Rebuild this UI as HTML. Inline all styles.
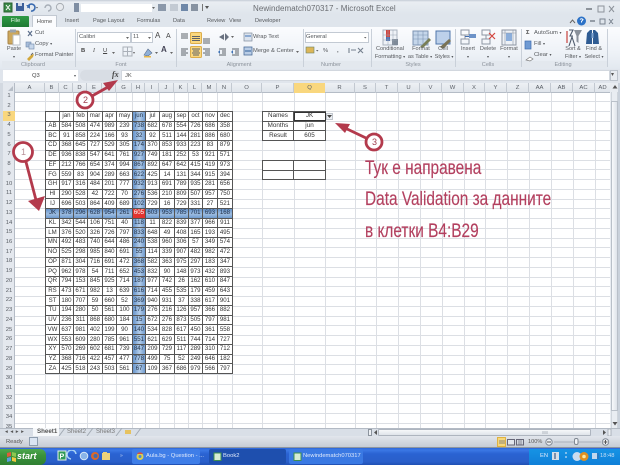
<!DOCTYPE html>
<html><head><meta charset="utf-8">
<style>
html,body{margin:0;padding:0;width:620px;height:465px;overflow:hidden;background:#fff}
#p{position:relative;width:620px;height:465px;overflow:hidden;font-family:"Liberation Sans",sans-serif;filter:blur(.3px);background:#fff}
.a{position:absolute}
.t{position:absolute;white-space:nowrap;font-size:5.8px;line-height:8px;color:#55585c}
.c{position:absolute;white-space:nowrap;font-size:5.6px;line-height:7px;color:#55585c;text-align:center;transform:translateX(-50%)}
.c span,.t span{font-size:4px}
.g{position:absolute;top:62px;font-size:5.6px;line-height:7px;color:#8b929b;transform:translateX(-50%);white-space:nowrap}
.s{position:absolute;top:29px;width:1px;height:38px;background:#c9d0d9}
table{position:absolute;border-collapse:collapse;table-layout:fixed;font-size:6.1px;color:#333;background:#fff}
td{border:1px solid #555;padding:0;text-align:center;line-height:8px;overflow:hidden;white-space:nowrap}
#d td:nth-child(7){background:linear-gradient(90deg,#6a97cd,#b4cde9 50%,#6a97cd);color:#25354a}
#d tr.h td{background:linear-gradient(180deg,#6a97cd,#9dbce0 50%,#6a97cd);color:#22324a}
#d tr.h td.r{background:#e2342f;color:#fff}
.tb{position:absolute;top:449px;height:15px;color:#dfe9fb;font-size:5.8px;line-height:15px;border-radius:2px;white-space:nowrap}
.n{position:absolute;left:365px;font-size:19.5px;line-height:24px;color:#b3405f;white-space:nowrap;transform:scaleX(.79);transform-origin:0 0;-webkit-text-stroke:.15px #b3405f}
</style></head><body><div id="p">

<!-- title + ribbon -->
<div class="a" style="left:0;top:0;width:620px;height:14px;background:linear-gradient(#c4ccd6 0,#e9edf2 2px,#dfe5ec)"></div>
<div class="a" style="left:0;top:14px;width:620px;height:13px;background:#dfe5ec"></div>
<div class="a" style="left:0;top:27px;width:620px;height:42px;background:linear-gradient(#fbfcfe,#eef2f7 60%,#e2e8ef);border-bottom:1px solid #a9b1bb"></div>
<div class="a" style="left:2px;top:61px;width:606px;height:7px;background:#e3e8ee"></div>

<!-- QAT -->
<svg class="a" style="left:0;top:0" width="250" height="14">
<rect x="4" y="3" width="8" height="9" fill="#3b8a48" stroke="#27602f"/><path d="M6 5l4 5M10 5l-4 5" stroke="#fff" stroke-width="1"/>
<rect x="16" y="3" width="8" height="8" fill="#3c5f99"/><rect x="18" y="3" width="4" height="3" fill="#cfd8e8"/>
<path d="M28 8a3.5 3.5 0 1 1 3 3" fill="none" stroke="#3c6cb0" stroke-width="1.6"/><path d="M26 5h4v4z" fill="#3c6cb0"/>
<path d="M36 7l2 0-1 1.5z" fill="#555"/>
<path d="M45 8a3 3 0 1 1 3 3" fill="none" stroke="#a6adb6" stroke-width="1.4"/>
<circle cx="60" cy="7" r="3.6" fill="#e7eaee" stroke="#a8adb3"/><rect x="74" y="3" width="5" height="9" fill="#7f8ea3"/>
<rect x="81" y="4" width="71" height="8" fill="#fff"/>
<path d="M152 7h3l-1.500 2z" fill="#666"/>
<rect x="158" y="4" width="8" height="7" fill="#8b98aa"/><rect x="170" y="4" width="8" height="7" fill="#c3cad3"/><rect x="181" y="4" width="7" height="7" fill="#6f88a9"/><rect x="191" y="4" width="7" height="7" fill="#8893a2"/>
<rect x="202" y="4" width="1" height="7" fill="#777"/><path d="M205 6h4l-2 3z" fill="#555"/>
</svg>
<div class="t" style="left:253px;top:4px;font-size:8px;line-height:9px;letter-spacing:.05px;color:#6a6d72">Newindematch070317 - Microsoft Excel</div>
<svg class="a" style="left:580px;top:2px" width="40" height="24">
<path d="M6 7h6" stroke="#8d939b" stroke-width="2"/><rect x="18" y="4" width="6" height="6" fill="none" stroke="#8d939b"/><path d="M29 4l5 6M34 4l-5 6" stroke="#8d939b"/>
</svg>
<svg class="a" style="left:565px;top:14px" width="50" height="14">
<path d="M5 9l2.500-3 2.500 3" fill="none" stroke="#666"/><circle cx="16.500" cy="7" r="4.500" fill="#2c72c7"/><path d="M15 5.500q1.500-1.500 3 0l-1.500 2v1" fill="none" stroke="#fff"/>
<path d="M25 7h5" stroke="#7a838f" stroke-width="1.500"/><rect x="35" y="5" width="5" height="5" fill="none" stroke="#7a838f"/><path d="M44 5l4 5M48 5l-4 5" stroke="#7a838f"/>
</svg>

<!-- tabs -->
<div class="a" style="left:2px;top:16px;width:27px;height:11px;background:linear-gradient(#2e9a44,#1f7a34);border-radius:1px 1px 0 0;color:#e9f5ea;font-size:5.8px;line-height:11px;text-align:center">File</div>
<div class="a" style="left:32px;top:15px;width:25px;height:12px;background:#fbfcfe;border:1px solid #c2c9d2;border-bottom:0;box-sizing:border-box;color:#555;font-size:5.8px;line-height:12px;text-align:center">Home</div>
<div class="t" style="left:65px;top:17px;font-size:5.6px">Insert</div>
<div class="t" style="left:93px;top:17px;font-size:5.6px">Page Layout</div>
<div class="t" style="left:137px;top:17px;font-size:5.6px">Formulas</div>
<div class="t" style="left:173px;top:17px;font-size:5.6px">Data</div>
<div class="t" style="left:207px;top:17px;font-size:5.6px">Review</div>
<div class="t" style="left:229px;top:17px;font-size:5.6px">View</div>
<div class="t" style="left:255px;top:17px;font-size:5.6px">Developer</div>

<!-- separators -->
<div class="s" style="left:75px"></div><div class="s" style="left:176px"></div><div class="s" style="left:303px"></div><div class="s" style="left:371px"></div><div class="s" style="left:455px"></div><div class="s" style="left:521px"></div><div class="s" style="left:607px"></div>

<!-- ribbon icons -->
<svg class="a" style="left:0;top:27px" width="620" height="36">
<rect x="8" y="4" width="11" height="13" rx="1" fill="#cda85c" stroke="#a9854a"/><rect x="10" y="2.500" width="6" height="3" fill="#9aa3ad"/><rect x="13" y="8" width="7" height="10" fill="#fff" stroke="#b7bdc5"/>
<path d="M28 4l4 5M32 4l-4 5" stroke="#5d6f8c" stroke-width="1.200"/>
<rect x="26" y="15" width="5" height="5" fill="#a7bddb" stroke="#6f88a9" stroke-width=".6"/><rect x="29" y="17" width="5" height="5" fill="#c6d6ea" stroke="#6f88a9" stroke-width=".6"/>
<path d="M27 32l4-4 3-1-1 3-4 4z" fill="#d2a73b"/><path d="M31 28l2-2" stroke="#666"/>
<rect x="77.500" y="5.500" width="53" height="10" fill="#fff" stroke="#c3cad3"/><rect x="131.500" y="5.500" width="21" height="10" fill="#fff" stroke="#c3cad3"/>
<path d="M126 10h3l-1.500 2zM148 10h3l-1.500 2z" fill="#666"/>
<path d="M112 25h3l-1.500 2zM133 25h2l-1 2zM155 25h3l-1.500 2zM170 25h3l-1.500 2z" fill="#666"/>
<rect x="123" y="20" width="9" height="9" fill="none" stroke="#aab0b8"/><path d="M127.500 20v9M123 24.500h9" stroke="#aab0b8"/>
<path d="M144 28l4-6 4 4-4 3z" fill="#8fb0d8" stroke="#5a6f8d" stroke-width=".6"/><rect x="144" y="29" width="7" height="1.500" fill="#e7b84a"/>
<rect x="190.500" y="5.500" width="11" height="11" rx="1" fill="#fbd87e" stroke="#dcae4c"/><rect x="190.500" y="19.500" width="11" height="11" rx="1" fill="#fbd87e" stroke="#dcae4c"/>
<path d="M181 7h7M181 9h7M181 11h7M192 9.500h8M192 11.500h8M192 13.500h8M203 12h7M203 14h7M203 16h7" stroke="#5c6268" stroke-width="1"/>
<path d="M181 22h7M181 24h5M181 26h7M181 28h5M192 22h8M193 24h6M192 26h8M193 28h6M203 22h7M205 24h5M203 26h7M205 28h5" stroke="#5c6268"/>
<path d="M219 10l5-3v6zM225 6l4 4-4 4" fill="#6a7280"/><path d="M231 9h3l-1.500 2z" fill="#666"/>
<path d="M219 22h7M222 24h4M222 26h4M219 28h7M232 22h7M235 24h4M235 26h4M232 28h7" stroke="#5c6268"/>
<path d="M218 25l2-2v4zM231 25l2-2v4z" fill="#3e72b5"/>
<rect x="244" y="6" width="8" height="8" fill="#dbe3ee" stroke="#7f8b9b" stroke-width=".7"/><path d="M245 9h6" stroke="#3e72b5"/>
<rect x="244" y="20" width="8" height="8" fill="#b9cde6" stroke="#4b6d99" stroke-width=".8"/><path d="M245 24h6" stroke="#2f5e9b"/>
<path d="M296 24h3l-1.500 2z" fill="#666"/>
<rect x="305.500" y="5.500" width="63" height="10" fill="#fff" stroke="#c3cad3"/><path d="M364 10h2.500l-1.250 1.500z" fill="#666"/>
<rect x="306" y="20" width="8" height="6" fill="#dcb658" stroke="#6e8467" stroke-width=".6"/><path d="M316 23h2.500l-1.250 1.500z" fill="#666"/>
<path d="M349 21v5M351 23h5M358 21l5 5M363 21l-5 5" stroke="#75808e" stroke-width="1.100"/>
<rect x="383" y="3" width="14" height="15" fill="#eef2f7" stroke="#a9b3bf"/><rect x="386" y="3" width="4" height="7" fill="#d1433c"/><rect x="386" y="10" width="4" height="4" fill="#4a6fb0"/><rect x="392" y="12" width="6" height="6" fill="#7e8a98"/>
<path d="M383 8h14M383 13h14M388 3v15M393 3v15" stroke="#9aa5b3" stroke-width=".5"/>
<rect x="413" y="4" width="15" height="14" fill="#c5d6ea" stroke="#7c93b1"/><path d="M413 8h15M413 12h15M418 4v14M423 4v14" stroke="#7c93b1" stroke-width=".6"/><path d="M420 20l9-9 2 2-8 8z" fill="#7a7f57"/>
<rect x="436" y="4" width="14" height="13" fill="#bcd0ea" stroke="#4f76ab"/><path d="M440 20l9-8 2 2-8 8z" fill="#7a7356"/>
<rect x="461" y="3" width="8" height="5" fill="none" stroke="#8d96a3"/><rect x="461" y="12" width="8" height="5" fill="none" stroke="#8d96a3"/><path d="M465 8v4" stroke="#8d96a3"/><rect x="469" y="7" width="7" height="4" fill="#6d93c8"/><path d="M465 9.500h4" stroke="#3e6cb0"/>
<rect x="482" y="3" width="8" height="5" fill="none" stroke="#8d96a3"/><rect x="482" y="12" width="8" height="5" fill="none" stroke="#8d96a3"/><path d="M486 8v4" stroke="#8d96a3"/><path d="M489 6l6 6M495 6l-6 6" stroke="#d4463f" stroke-width="1.200"/>
<rect x="502" y="3" width="14" height="15" fill="#eef2f7" stroke="#8d96a3"/><rect x="506" y="6" width="6" height="8" fill="#8baedb"/><path d="M502 6h14M505 3v15M513 3v15" stroke="#8d96a3" stroke-width=".6"/>
<rect x="525" y="14" width="6" height="8" fill="#6f9ad3" stroke="#3e6cb0" stroke-width=".7"/>
<path d="M526 33l4-3 3 2-3 2z" fill="#fff" stroke="#7a7a7a" stroke-width=".7"/>
<path d="M569 3l4 0-3 6h3M569 19l3-9 3 9" fill="none" stroke="#4d5a6c" stroke-width="1.100"/><path d="M567 4v12" stroke="#c6413c" stroke-width="1.200"/><path d="M574 3h8l-3.500 6v7l-2-1.500V9z" fill="#8a919b"/>
<path d="M587 6l3-3h2v14h-6zM598 6l-3-3h-2v14h6z" fill="#2f5c93"/><rect x="591.500" y="6" width="2" height="5" fill="#7fa4d0"/>
</svg>

<!-- ribbon text -->
<div class="c" style="left:14px;top:46px">Paste</div><div class="c" style="left:14px;top:53px"><span>▾</span></div>
<div class="t" style="left:35px;top:29px">Cut</div><div class="t" style="left:35px;top:40px">Copy <span>▾</span></div><div class="t" style="left:35px;top:51px">Format Painter</div>
<div class="g" style="left:33px">Clipboard</div><div class="g" style="left:121px">Font</div><div class="g" style="left:239px">Alignment</div><div class="g" style="left:331px">Number</div><div class="g" style="left:413px">Styles</div><div class="g" style="left:488px">Cells</div><div class="g" style="left:563px">Editing</div>
<div class="t" style="left:79px;top:33px">Calibri</div><div class="t" style="left:133px;top:33px">11</div>
<div class="t" style="left:155px;top:32px;font-size:8px;color:#444">A</div><div class="t" style="left:166px;top:33px;font-size:7px;color:#444">A</div>
<div class="t" style="left:81px;top:47px;font-weight:bold;color:#444">B</div><div class="t" style="left:93px;top:47px;font-style:italic;font-family:'Liberation Serif',serif;color:#444">I</div><div class="t" style="left:103px;top:47px;text-decoration:underline;color:#444">U</div>
<div class="t" style="left:161px;top:46px;font-size:8px;color:#445;font-weight:bold">A</div>
<div class="t" style="left:253px;top:33px">Wrap Text</div><div class="t" style="left:253px;top:47px">Merge &amp; Center</div>
<div class="t" style="left:306px;top:33px;color:#4f5358">General</div>
<div class="t" style="left:323px;top:47px">%</div><div class="t" style="left:337px;top:47px;font-weight:bold">,</div>
<div class="c" style="left:390px;top:46px">Conditional</div><div class="c" style="left:390px;top:53px">Formatting <span>▾</span></div>
<div class="c" style="left:421px;top:46px">Format</div><div class="c" style="left:420px;top:53px">as Table <span>▾</span></div>
<div class="c" style="left:443px;top:46px">Cell</div><div class="c" style="left:444px;top:53px">Styles <span>▾</span></div>
<div class="c" style="left:468px;top:46px">Insert</div><div class="c" style="left:488px;top:46px">Delete</div><div class="c" style="left:509px;top:46px">Format</div>
<div class="c" style="left:468px;top:53px"><span>▾</span></div><div class="c" style="left:488px;top:53px"><span>▾</span></div><div class="c" style="left:509px;top:53px"><span>▾</span></div>
<div class="t" style="left:526px;top:29px;font-weight:bold;color:#444">Σ</div><div class="t" style="left:534px;top:29px">AutoSum <span>▾</span></div><div class="t" style="left:534px;top:40px">Fill <span>▾</span></div><div class="t" style="left:534px;top:51px">Clear <span>▾</span></div>
<div class="c" style="left:573px;top:46px">Sort &amp;</div><div class="c" style="left:573px;top:53px">Filter <span>▾</span></div>
<div class="c" style="left:594px;top:46px">Find &amp;</div><div class="c" style="left:594px;top:53px">Select <span>▾</span></div>

<!-- formula bar -->
<div class="a" style="left:0;top:69px;width:620px;height:14px;background:#e0e5ec"></div>
<div class="a" style="left:3px;top:70px;width:75px;height:11px;background:#fff"></div>
<div class="t" style="left:32px;top:72px;color:#444">Q3</div><div class="t" style="left:74px;top:72px"><span>▾</span></div>
<div class="a" style="left:80px;top:70px;width:40px;height:11px;background:#d8dde4;border-radius:6px"></div>
<div class="t" style="left:112px;top:71px;font-style:italic;font-weight:bold;font-family:'Liberation Serif',serif;font-size:8px;color:#444">fx</div>
<div class="a" style="left:121px;top:70px;width:489px;height:11px;background:#fff;border:1px solid #d2d7de;box-sizing:border-box"></div>
<div class="t" style="left:125px;top:72px;color:#555">JK</div>
<div class="a" style="left:610px;top:70px;width:8px;height:11px;background:#e8ecf1;border:1px solid #bcc3cc;box-sizing:border-box"></div>
<div class="a" style="left:611px;top:72px;font-size:6px;line-height:7px;color:#555">▾</div>

<!-- sheet grid -->
<svg class="a" style="left:0;top:0" width="620" height="465">
<path d="M45.500 92V428M59.500 92V428M73.500 92V428M87.500 92V428M102.500 92V428M116.500 92V428M132.500 92V428M145.500 92V428M159.500 92V428M174.500 92V428M188.500 92V428M202.500 92V428M217.500 92V428M232.500 92V428M262.500 92V428M294.500 92V428M325.500 92V428M355.500 92V428M376.500 92V428M398.500 92V428M420.500 92V428M442.500 92V428M464.500 92V428M485.500 92V428M507.500 92V428M529.500 92V428M551.500 92V428M573.500 92V428M595.500 92V428" stroke="#dcdfe4"/>
<path d="M15 101.500H610M15 111.500H610M15 121.500H610M15 130.500H610M15 140.500H610M15 150.500H610M15 160.500H610M15 169.500H610M15 179.500H610M15 189.500H610M15 199.500H610M15 208.500H610M15 218.500H610M15 228.500H610M15 238.500H610M15 247.500H610M15 257.500H610M15 267.500H610M15 277.500H610M15 286.500H610M15 296.500H610M15 306.500H610M15 316.500H610M15 325.500H610M15 335.500H610M15 345.500H610M15 355.500H610M15 364.500H610M15 374.500H610M15 384.500H610M15 394.500H610M15 403.500H610M15 413.500H610M15 423.500H610" stroke="#dcdfe4"/>
</svg>

<!-- col headers -->
<div class="a" style="left:0;top:83px;width:620px;height:9px;background:linear-gradient(#edf0f4,#dfe4ea);border-bottom:1px solid #b5bcc6;box-sizing:content-box"></div>
<div class="a" style="left:0;top:83px;height:10px;display:flex;font-size:5.9px;line-height:10px;color:#5a5f66;text-align:center;padding-left:15px">
<div style="width:30px;border-right:1px solid #c3c9d1;box-sizing:border-box">A</div><div style="width:14px;border-right:1px solid #c3c9d1;box-sizing:border-box">B</div><div style="width:14px;border-right:1px solid #c3c9d1;box-sizing:border-box">C</div><div style="width:14px;border-right:1px solid #c3c9d1;box-sizing:border-box">D</div><div style="width:15px;border-right:1px solid #c3c9d1;box-sizing:border-box">E</div><div style="width:14px;border-right:1px solid #c3c9d1;box-sizing:border-box">F</div><div style="width:16px;border-right:1px solid #c3c9d1;box-sizing:border-box">G</div><div style="width:13px;border-right:1px solid #c3c9d1;box-sizing:border-box">H</div><div style="width:14px;border-right:1px solid #c3c9d1;box-sizing:border-box">I</div><div style="width:15px;border-right:1px solid #c3c9d1;box-sizing:border-box">J</div><div style="width:14px;border-right:1px solid #c3c9d1;box-sizing:border-box">K</div><div style="width:14px;border-right:1px solid #c3c9d1;box-sizing:border-box">L</div><div style="width:15px;border-right:1px solid #c3c9d1;box-sizing:border-box">M</div><div style="width:15px;border-right:1px solid #c3c9d1;box-sizing:border-box">N</div><div style="width:30px;border-right:1px solid #c3c9d1;box-sizing:border-box">O</div><div style="width:32px;border-right:1px solid #c3c9d1;box-sizing:border-box">P</div><div style="width:31px;background:#f9d77e;box-sizing:border-box">Q</div><div style="width:30px;border-right:1px solid #c3c9d1;box-sizing:border-box">R</div><div style="width:21px;border-right:1px solid #c3c9d1;box-sizing:border-box">S</div><div style="width:22px;border-right:1px solid #c3c9d1;box-sizing:border-box">T</div><div style="width:22px;border-right:1px solid #c3c9d1;box-sizing:border-box">U</div><div style="width:22px;border-right:1px solid #c3c9d1;box-sizing:border-box">V</div><div style="width:22px;border-right:1px solid #c3c9d1;box-sizing:border-box">W</div><div style="width:21px;border-right:1px solid #c3c9d1;box-sizing:border-box">X</div><div style="width:22px;border-right:1px solid #c3c9d1;box-sizing:border-box">Y</div><div style="width:22px;border-right:1px solid #c3c9d1;box-sizing:border-box">Z</div><div style="width:22px;border-right:1px solid #c3c9d1;box-sizing:border-box">AA</div><div style="width:22px;border-right:1px solid #c3c9d1;box-sizing:border-box">AB</div><div style="width:22px;border-right:1px solid #c3c9d1;box-sizing:border-box">AC</div><div style="width:15px">AD</div>
</div>

<!-- row headers -->
<div class="a" style="left:0;top:83px;width:3px;height:353px;background:#d3d9e1"></div>
<div class="a" style="left:3px;top:83px;width:12px;height:345px;background:#e4e8ee;border-right:1px solid #b5bcc6;box-sizing:border-box"></div>
<div class="a" style="left:3px;top:111px;width:12px;height:10px;background:#f9d77e"></div>
<div class="a" style="left:3px;top:92px;width:12px;height:336px;overflow:hidden;font-size:5.9px;line-height:9.74px;color:#5a5f66;text-align:center">1<br>2<br>3<br>4<br>5<br>6<br>7<br>8<br>9<br>10<br>11<br>12<br>13<br>14<br>15<br>16<br>17<br>18<br>19<br>20<br>21<br>22<br>23<br>24<br>25<br>26<br>27<br>28<br>29<br>30<br>31<br>32<br>33<br>34<br>35</div>
<div class="a" style="left:3px;top:83px;width:12px;height:9px;background:#e4e8ee;border-right:1px solid #b5bcc6;box-sizing:border-box"></div>
<svg class="a" style="left:8px;top:86px" width="6" height="6"><path d="M5 0v5H0z" fill="#b7bec7"/></svg>

<!-- data table -->
<table id="d" style="left:45px;top:111px;width:188px;height:263px">
<colgroup><col style="width:14px"><col style="width:14px"><col style="width:14px"><col style="width:15px"><col style="width:14px"><col style="width:16px"><col style="width:13px"><col style="width:14px"><col style="width:15px"><col style="width:14px"><col style="width:14px"><col style="width:15px"><col style="width:15px"></colgroup>
<tr><td></td><td>jan</td><td>feb</td><td>mar</td><td>apr</td><td>may</td><td>jun</td><td>jul</td><td>aug</td><td>sep</td><td>oct</td><td>nov</td><td>dec</td></tr>
<tr><td>AB</td><td>584</td><td>508</td><td>474</td><td>989</td><td>239</td><td>738</td><td>682</td><td>678</td><td>554</td><td>726</td><td>686</td><td>358</td></tr>
<tr><td>BC</td><td>91</td><td>858</td><td>224</td><td>166</td><td>93</td><td>32</td><td>92</td><td>511</td><td>144</td><td>281</td><td>886</td><td>680</td></tr>
<tr><td>CD</td><td>368</td><td>645</td><td>727</td><td>529</td><td>305</td><td>174</td><td>370</td><td>853</td><td>933</td><td>223</td><td>83</td><td>879</td></tr>
<tr><td>DE</td><td>936</td><td>838</td><td>547</td><td>641</td><td>761</td><td>927</td><td>749</td><td>181</td><td>252</td><td>53</td><td>921</td><td>571</td></tr>
<tr><td>EF</td><td>212</td><td>766</td><td>654</td><td>374</td><td>994</td><td>867</td><td>892</td><td>647</td><td>642</td><td>415</td><td>419</td><td>973</td></tr>
<tr><td>FG</td><td>559</td><td>83</td><td>904</td><td>289</td><td>663</td><td>622</td><td>425</td><td>14</td><td>131</td><td>344</td><td>915</td><td>394</td></tr>
<tr><td>GH</td><td>917</td><td>316</td><td>484</td><td>201</td><td>777</td><td>932</td><td>913</td><td>691</td><td>789</td><td>935</td><td>281</td><td>656</td></tr>
<tr><td>HI</td><td>290</td><td>528</td><td>42</td><td>722</td><td>70</td><td>276</td><td>536</td><td>210</td><td>809</td><td>507</td><td>957</td><td>750</td></tr>
<tr><td>IJ</td><td>696</td><td>503</td><td>864</td><td>409</td><td>689</td><td>102</td><td>729</td><td>16</td><td>729</td><td>331</td><td>27</td><td>521</td></tr>
<tr class="h"><td>JK</td><td>378</td><td>296</td><td>628</td><td>954</td><td>261</td><td class="r">605</td><td>603</td><td>953</td><td>785</td><td>701</td><td>693</td><td>168</td></tr>
<tr><td>KL</td><td>342</td><td>544</td><td>106</td><td>751</td><td>40</td><td>118</td><td>11</td><td>822</td><td>839</td><td>377</td><td>966</td><td>911</td></tr>
<tr><td>LM</td><td>376</td><td>520</td><td>326</td><td>726</td><td>797</td><td>833</td><td>648</td><td>49</td><td>408</td><td>165</td><td>193</td><td>495</td></tr>
<tr><td>MN</td><td>492</td><td>483</td><td>740</td><td>644</td><td>486</td><td>240</td><td>538</td><td>960</td><td>306</td><td>57</td><td>349</td><td>574</td></tr>
<tr><td>NO</td><td>525</td><td>298</td><td>985</td><td>840</td><td>691</td><td>55</td><td>114</td><td>339</td><td>907</td><td>482</td><td>982</td><td>472</td></tr>
<tr><td>OP</td><td>871</td><td>304</td><td>716</td><td>691</td><td>472</td><td>368</td><td>582</td><td>363</td><td>975</td><td>297</td><td>183</td><td>347</td></tr>
<tr><td>PQ</td><td>962</td><td>978</td><td>54</td><td>711</td><td>652</td><td>453</td><td>832</td><td>90</td><td>148</td><td>973</td><td>432</td><td>893</td></tr>
<tr><td>QR</td><td>794</td><td>153</td><td>845</td><td>925</td><td>714</td><td>187</td><td>977</td><td>742</td><td>26</td><td>162</td><td>610</td><td>847</td></tr>
<tr><td>RS</td><td>473</td><td>671</td><td>982</td><td>13</td><td>639</td><td>616</td><td>714</td><td>455</td><td>535</td><td>179</td><td>459</td><td>643</td></tr>
<tr><td>ST</td><td>180</td><td>707</td><td>59</td><td>660</td><td>52</td><td>369</td><td>940</td><td>931</td><td>37</td><td>338</td><td>617</td><td>901</td></tr>
<tr><td>TU</td><td>194</td><td>280</td><td>50</td><td>561</td><td>100</td><td>179</td><td>276</td><td>216</td><td>126</td><td>957</td><td>366</td><td>882</td></tr>
<tr><td>UV</td><td>236</td><td>311</td><td>868</td><td>680</td><td>184</td><td>15</td><td>672</td><td>276</td><td>873</td><td>505</td><td>797</td><td>981</td></tr>
<tr><td>VW</td><td>637</td><td>981</td><td>402</td><td>199</td><td>90</td><td>140</td><td>534</td><td>828</td><td>617</td><td>450</td><td>361</td><td>558</td></tr>
<tr><td>WX</td><td>553</td><td>609</td><td>280</td><td>785</td><td>961</td><td>551</td><td>621</td><td>629</td><td>511</td><td>744</td><td>714</td><td>727</td></tr>
<tr><td>XY</td><td>570</td><td>269</td><td>602</td><td>681</td><td>739</td><td>847</td><td>209</td><td>729</td><td>117</td><td>289</td><td>310</td><td>712</td></tr>
<tr><td>YZ</td><td>368</td><td>716</td><td>422</td><td>457</td><td>477</td><td>778</td><td>499</td><td>75</td><td>52</td><td>249</td><td>646</td><td>182</td></tr>
<tr><td>ZA</td><td>425</td><td>518</td><td>243</td><td>503</td><td>561</td><td>67</td><td>109</td><td>367</td><td>686</td><td>979</td><td>566</td><td>797</td></tr>
</table>

<!-- side tables -->
<table style="left:262px;top:111px;width:63px;height:30px;font-size:6.3px">
<colgroup><col style="width:31px"><col style="width:32px"></colgroup>
<tr><td>Names</td><td style="outline:1.500px solid #333;outline-offset:-1px">JK</td></tr><tr><td>Months</td><td>jun</td></tr><tr><td>Result</td><td>605</td></tr>
</table>
<table style="left:262px;top:160px;width:63px;height:20px">
<colgroup><col style="width:31px"><col style="width:32px"></colgroup>
<tr><td>&nbsp;</td><td>&nbsp;</td></tr><tr><td>&nbsp;</td><td>&nbsp;</td></tr>
</table>
<div class="a" style="left:326px;top:113px;width:7px;height:7px;background:#eceff3;border:1px solid #c0c5cc;box-sizing:border-box"></div>
<svg class="a" style="left:327px;top:115px" width="5" height="3"><path d="M0 0h5L2.500 3z" fill="#444"/></svg>

<!-- annotation text -->
<div class="n" style="top:156px">Тук е направена</div>
<div class="n" style="top:187px">Data Validation за данните</div>
<div class="n" style="top:219px">в клетки B4:B29</div>

<!-- annotation arrows -->
<svg class="a" style="left:0;top:0" width="620" height="465">
<g fill="none" stroke="#b33a4c" stroke-width="2.800">
<path d="M26 162L36 200"/><circle cx="23" cy="152" r="9.500" fill="#fff"/>
<path d="M92 96L108 87" stroke-width="3"/><circle cx="85" cy="100" r="8" fill="#fff"/>
<path d="M366 138L345 128"/><circle cx="374" cy="142" r="8" fill="#fff"/>
</g>
<path d="M28 201L45 196L39 211Z" fill="#b33a4c"/>
<path d="M118 80L103 83L109 91Z" fill="#b33a4c"/>
<path d="M335 123L350 124L345 133Z" fill="#b33a4c"/>
<text x="21" y="155" font-size="9" fill="#b89098" font-family="Liberation Sans">1</text>
<text x="83" y="103" font-size="9" fill="#a04050" font-family="Liberation Sans">2</text>
<text x="372" y="145" font-size="9" fill="#a04050" font-family="Liberation Sans">3</text>
</svg>

<!-- v scroll -->
<div class="a" style="left:610px;top:83px;width:10px;height:345px;background:#e8ecf1"></div>
<div class="a" style="left:611px;top:92px;width:7px;height:336px;background:#e9edf2;border-left:1px solid #cfd5dc;border-right:1px solid #cfd5dc;box-sizing:border-box"></div>
<div class="a" style="left:611px;top:101px;width:7px;height:310px;background:linear-gradient(90deg,#f7f9fb,#dee3ea);border:1px solid #b9c0c9;box-sizing:border-box"></div>
<svg class="a" style="left:611px;top:84px" width="8" height="350"><path d="M1.500 4.500h5L4 1zM1.500 338h5L4 341.500z" fill="#555"/></svg>
<div class="a" style="left:618px;top:83px;width:2px;height:365px;background:#c9d1db"></div>

<!-- sheet tabs -->
<div class="a" style="left:0;top:428px;width:620px;height:8px;background:#d9dfe7;border-top:1px solid #b3bac4;box-sizing:border-box"></div>
<div class="t" style="left:5px;top:428px;font-size:5.500px;color:#555;letter-spacing:2.600px">◂◂▸▸</div>
<div class="a" style="left:33px;top:428px;width:26px;height:8px;background:#f7f9fb"></div>
<div class="t" style="left:37px;top:428px;font-size:6.200px;font-weight:bold;color:#555">Sheet1</div>
<div class="t" style="left:67px;top:428px;font-size:6px;color:#777">Sheet2</div>
<div class="t" style="left:96px;top:428px;font-size:6px;color:#777">Sheet3</div>
<svg class="a" style="left:57px;top:428px" width="85" height="8"><path d="M2 8L8 0M30 8L36 0M59 8L65 0M84 0L78 8" stroke="#a3abb5" fill="none"/><rect x="68" y="2" width="6" height="4" fill="#e6c260"/></svg>
<div class="a" style="left:368px;top:429px;width:4px;height:7px;background:#eceff3;border:1px solid #8c949e;box-sizing:border-box"></div>
<div class="a" style="left:378px;top:429px;width:213px;height:6.500px;background:linear-gradient(#f6f8fa,#dfe4ea);border:1px solid #aeb5bf;box-sizing:border-box;border-radius:1px"></div>
<svg class="a" style="left:372px;top:429px" width="240" height="7"><path d="M5 1L2 3.500 5 6zM231 1l3 2.500L231 6z" fill="#555"/><rect x="236" y="0" width="3" height="7" fill="#eceff3" stroke="#8c949e" stroke-width=".6"/><path d="M171 2v3M173 2v3M175 2v3" stroke="#8d959f" stroke-width=".6"/></svg>

<!-- status bar -->
<div class="a" style="left:0;top:436px;width:620px;height:12px;background:linear-gradient(#e2e6ec,#c6ccd5);border-bottom:1px solid #8c95a0;box-sizing:border-box"></div>
<div class="t" style="left:6px;top:438px;color:#555">Ready</div>
<div class="a" style="left:29px;top:437px;width:9px;height:9px;background:#dbe5f2;border:1px solid #8e9dae;box-sizing:border-box"></div>
<div class="a" style="left:497px;top:437px;width:9px;height:10px;background:#f5d77c;border:1px solid #e0b23f;box-sizing:border-box"></div>
<svg class="a" style="left:497px;top:437px" width="122" height="10">
<path d="M3 3v4M5 3v4M7 3v4" stroke="#667" stroke-width=".7"/><rect x="10.500" y="2.500" width="7" height="5.500" fill="#e2e6ec" stroke="#667"/><rect x="19.500" y="2.500" width="7" height="5.500" fill="none" stroke="#667"/><path d="M22 3v5M24 3v5" stroke="#667" stroke-width=".7"/>
<circle cx="52" cy="5" r="3.200" fill="#eef1f5" stroke="#848c97"/><path d="M50 5h4" stroke="#555"/>
<path d="M57 5h47" stroke="#a9b0ba"/><rect x="77.500" y="1.500" width="3.500" height="6" rx="1.500" fill="#f1f3f6" stroke="#7f8791"/>
<circle cx="108.500" cy="5" r="3.200" fill="#eef1f5" stroke="#848c97"/><path d="M106.500 5h4M108.500 3v4" stroke="#555"/>
</svg>
<div class="t" style="left:528px;top:438px;color:#555;font-size:5.600px">100%</div>

<!-- taskbar -->
<div class="a" style="left:0;top:448px;width:620px;height:17px;background:linear-gradient(#2c66d8 0,#3b78e5 2px,#2a62d2 6px,#2a5fc9 14px,#1f4fb3)"></div>
<div class="a" style="left:0;top:449px;width:46px;height:16px;background:linear-gradient(#4ea84e,#3a923a 40%,#2f7f32);border-radius:0 6px 6px 0"></div>
<svg class="a" style="left:6px;top:451px" width="12" height="12"><path d="M1 2l4-1v4l-4 1z" fill="#e05a3a"/><path d="M6 1l4 1v4l-4-1z" fill="#8cc850"/><path d="M1 7l4-1v4l-4 1z" fill="#5a9de0"/><path d="M6 6l4 1v4l-4-1z" fill="#f2c840"/></svg>
<div class="a" style="left:17px;top:448px;font-size:9px;line-height:17px;color:#fff;font-style:italic;font-weight:bold">start</div>
<svg class="a" style="left:56px;top:450px" width="70" height="13">
<rect x="2" y="1" width="8" height="9" fill="#2f9a5a" stroke="#e4f2e8"/><text x="3.500" y="8.500" font-size="7" font-weight="bold" fill="#fff" font-family="Liberation Sans">P</text>
<path d="M15 9a4.500 4.500 0 1 1 5-5" fill="none" stroke="#a9d3f5" stroke-width="1.500"/>
<circle cx="28" cy="6" r="3.800" fill="#8ab4e8" stroke="#d8e8f7"/>
<circle cx="39" cy="6" r="4" fill="#d9682b"/><circle cx="39.500" cy="6" r="2" fill="#3e6cb0"/>
<rect x="46" y="3" width="8" height="7" fill="#eed27a"/><rect x="47" y="2" width="4" height="2" fill="#eed27a"/>
</svg>
<div class="t" style="left:120px;top:452px;font-size:5px;color:#bcd0f2">»</div>
<div class="tb" style="left:132px;width:68px;padding-left:14px;box-sizing:border-box;background:#3f7ee8">Aula.bg - Question - ...</div>
<div class="tb" style="left:209px;width:77px;padding-left:14px;box-sizing:border-box;background:#1e4fae">Book2</div>
<div class="tb" style="left:289px;width:74px;padding-left:14px;box-sizing:border-box;background:#3a79e3">Newindematch070317</div>
<svg class="a" style="left:135px;top:452px" width="230" height="10"><circle cx="5" cy="4.500" r="3.500" fill="#d9d04f"/><circle cx="5" cy="4.500" r="1.500" fill="#4a87d8"/><path d="M2 2a3.500 3.500 0 0 1 6 0z" fill="#d8503e"/><rect x="79" y="1" width="7" height="7.500" fill="#d6ecd4" stroke="#3f8f4f"/><rect x="159" y="1" width="7" height="7.500" fill="#d6ecd4" stroke="#3f8f4f"/></svg>
<div class="a" style="left:529px;top:449px;width:91px;height:16px;background:linear-gradient(#1693e4,#0f7fd8)"></div>
<div class="t" style="left:540px;top:452px;color:#dfe9fb">EN</div>
<svg class="a" style="left:548px;top:450px" width="62" height="13">
<rect x="4" y="2" width="7" height="8" fill="#d6dee8"/><path d="M7 3v6" stroke="#20406f"/><path d="M18 2v2M18 6v2" stroke="#e9eff8"/>
<circle cx="29" cy="6.500" r="4.500" fill="#c9dcf0"/><circle cx="36" cy="6.500" r="4.500" fill="#e09020"/><circle cx="36" cy="6.500" r="1.800" fill="#fbe6a0"/>
<rect x="44" y="3" width="5" height="6" fill="#c2d8ee"/><path d="M50 3v6" stroke="#3f6ba8"/>
</svg>
<div class="t" style="left:600px;top:452px;color:#c7def5">18:48</div>

</div></body></html>
